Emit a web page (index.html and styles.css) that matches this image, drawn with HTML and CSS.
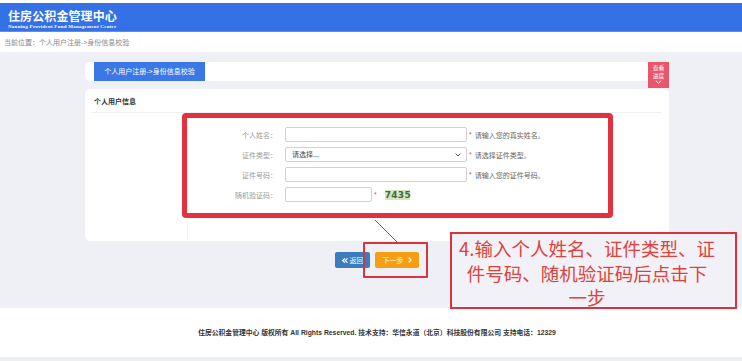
FILE: index.html
```html
<!DOCTYPE html>
<html lang="zh-CN">
<head>
<meta charset="utf-8">
<title>住房公积金管理中心</title>
<link rel="stylesheet" href="styles.css">
</head>
<body>
<header class="topbar">
  <div class="brand">
    <div class="brand-title">住房公积金管理中心</div>
    <div class="brand-sub">Nanning Provident Fund Management Center</div>
  </div>
</header>
<div class="crumb">当前位置：个人用户注册-&gt;身份信息校验</div>
<main class="main">
  <div class="wrap">
    <div class="tabrow">
      <div class="tabbar"><div class="tab">个人用户注册-&gt;身份信息校验</div></div>
      <div class="badge">
        <span class="bl">查看</span><span class="bl">进度</span>
        <svg width="7" height="4" viewBox="0 0 7 4"><path d="M0.8 0.6 L3.5 3.2 L6.2 0.6" fill="none" stroke="#fff" stroke-width="1"/></svg>
      </div>
    </div>
    <section class="card">
      <div class="card-title">个人用户信息</div>
      <div class="form">
        <div class="row">
          <label class="lbl">个人姓名：</label>
          <input class="inp" type="text">
          <span class="req">*</span><span class="hint">请输入您的真实姓名。</span>
        </div>
        <div class="row">
          <label class="lbl">证件类型：</label>
          <div class="sel">
            <span>请选择...</span>
            <svg class="chev" width="6" height="4" viewBox="0 0 6 4"><path d="M0.6 0.6 L3 3 L5.4 0.6" fill="none" stroke="#555" stroke-width="1"/></svg>
          </div>
          <span class="req">*</span><span class="hint">请选择证件类型。</span>
        </div>
        <div class="row">
          <label class="lbl">证件号码：</label>
          <input class="inp" type="text">
          <span class="req">*</span><span class="hint">请输入您的证件号码。</span>
        </div>
        <div class="row">
          <label class="lbl">随机验证码：</label>
          <input class="inp short" type="text">
          <span class="req">*</span><span class="captcha">7435</span>
        </div>
      </div>
    </section>
    <div class="actions">
      <button class="btn back"><svg width="6" height="5" viewBox="0 0 6 5"><path d="M3 0.3 L0.6 2.5 L3 4.7 M5.6 0.3 L3.2 2.5 L5.6 4.7" fill="none" stroke="#fff" stroke-width="1.1"/></svg>返回</button>
      <button class="btn next">下一步<svg width="4" height="6" viewBox="0 0 4 6"><path d="M0.8 0.6 L3 3 L0.8 5.4" fill="none" stroke="#fff" stroke-width="1.4"/></svg></button>
    </div>
  </div>

  <div class="mark mark-form"></div>
  <svg class="mark-line" width="30" height="30" viewBox="0 0 30 30"><line x1="3" y1="1" x2="25" y2="23" stroke="#c8404a" stroke-width="1"/></svg>
  <div class="mark mark-btn"></div>
  <div class="note">4.输入个人姓名、证件类型、证<br>件号码、随机验证码后点击下<br>一步</div>
</main>
<footer class="footer">住房公积金管理中心 版权所有 All Rights Reserved. 技术支持：华信永道（北京）科技股份有限公司 支持电话：12329</footer>
<div class="bottomline"></div>
</body>
</html>
```

FILE: styles.css
```css
* { box-sizing: border-box; }
html, body { margin: 0; padding: 0; }
body {
  width: 742px;
  height: 361px;
  overflow: hidden;
  background: #fff;
  font-family: "Liberation Sans", "Noto Sans CJK SC", sans-serif;
  color: #333;
}

.topbar {
  margin-top: 3px;
  height: 29px;
  background: #3471e6;
  border-bottom: 1px solid #5d8fe8;
}
.brand { padding: 6px 0 0 8px; color: #fff; }
.brand-title {
  font-family: "Noto Sans CJK SC", sans-serif;
  font-weight: 700;
  font-size: 12px;
  line-height: 14px;
  letter-spacing: 0.1px;
}
.brand-sub {
  font-family: "Liberation Serif", serif;
  font-weight: 700;
  font-size: 5px;
  line-height: 6px;
  margin-top: 1px;
  letter-spacing: 0.25px;
}

.crumb {
  height: 20px;
  line-height: 20px;
  padding-left: 4px;
  font-size: 7px;
  color: #8a8a8a;
  font-family: "Noto Sans CJK SC", sans-serif;
}

.main {
  position: relative;
  height: 256px;
  background: #eff0f5;
  padding-top: 10px;
}
.wrap { margin-left: 85px; width: 584px; }

.tabrow { display: flex; align-items: flex-start; height: 26px; }
.tabbar {
  width: 563px;
  height: 19px;
  background: #fff;
  border-radius: 5px 0 0 5px;
  padding-left: 9px;
}
.tab {
  width: 111px;
  height: 19px;
  line-height: 19px;
  background: #3a78e6;
  color: #fff;
  font-size: 7px;
  text-align: center;
  font-family: "Noto Sans CJK SC", sans-serif;
}
.badge {
  width: 21px;
  height: 26px;
  background: #e8566c;
  color: #fff;
  display: flex;
  flex-direction: column;
  align-items: center;
  padding-top: 2px;
  font-family: "Noto Sans CJK SC", sans-serif;
}
.bl { display: block; font-size: 5.8px; line-height: 7.5px; height: 7.5px; }
.badge svg { margin-top: 1px; }

.card {
  margin-top: 1px;
  height: 152px;
  background: #fff;
  border-radius: 5px;
  padding: 0 7px;
}
.card-title {
  height: 24px;
  line-height: 24px;
  padding-left: 2px;
  font-size: 7px;
  font-weight: 700;
  color: #333;
  border-bottom: 1px solid #eeeff2;
  font-family: "Noto Sans CJK SC", sans-serif;
}
.form {
  margin-left: 95px;
  height: 127px;
  border-left: 1px solid #f3f4f6;
  padding-top: 14px;
  display: flex;
  flex-direction: column;
  gap: 5px;
}
.row { display: flex; align-items: center; height: 15px; }
.lbl {
  width: 89px;
  text-align: right;
  font-size: 7px;
  color: #9a9a9a;
  margin-right: 8px;
  font-family: "Noto Sans CJK SC", sans-serif;
}
.inp, .sel {
  width: 182px;
  height: 15px;
  border: 1px solid #d2d2d2;
  border-radius: 2px;
  background: #fff;
  padding: 0;
  margin: 0;
}
.inp.short { width: 87px; }
.sel {
  position: relative;
  font-size: 7px;
  color: #444;
  line-height: 13px;
  padding-left: 6px;
  font-family: "Noto Sans CJK SC", sans-serif;
}
.chev { position: absolute; right: 5px; top: 5px; }
.req { color: #d9534f; font-size: 7px; margin: 0 3px 0 2px; }
.hint { font-size: 7px; color: #666; font-family: "Noto Sans CJK SC", sans-serif; }
.captcha {
  margin-left: 5px;
  width: 25px;
  height: 10px;
  line-height: 10px;
  background: #d6e6bd;
  color: #3d6b45;
  font-size: 9px;
  font-weight: 700;
  text-align: center;
  letter-spacing: 0.3px;
  font-family: "DejaVu Sans", sans-serif;
}

.actions {
  margin-top: 11px;
  display: flex;
  justify-content: center;
  gap: 5px;
}
.btn {
  height: 16px;
  border: 0;
  border-radius: 2px;
  color: #fff;
  font-size: 7px;
  padding: 0;
  display: flex;
  align-items: center;
  justify-content: center;
  gap: 2px;
  font-family: "Noto Sans CJK SC", sans-serif;
}
.back { width: 35px; background: #3b7cc0; }
.next { width: 44px; background: #f59e12; gap: 4px; }

.mark {
  position: absolute;
  border: 5px solid #e0323f;
  border-radius: 4px;
}
.mark-form { left: 182px; top: 61px; width: 431px; height: 105px; }
.mark-btn {
  left: 363px; top: 190px; width: 65px; height: 36px;
  border-width: 2px; border-radius: 1px; border-color: #d8343f;
}
.mark-line { position: absolute; left: 372px; top: 167px; }
.note {
  position: absolute;
  left: 450px;
  top: 180px;
  width: 287px;
  height: 77px;
  border: 2px solid #d8343f;
  background: #f2f1f7;
  color: #e0413b;
  font-size: 18.5px;
  line-height: 24.5px;
  text-align: center;
  padding: 2px 13px 0 0;
  white-space: nowrap;
  font-family: "Noto Sans CJK SC", sans-serif;
  z-index: 2;
}

.footer {
  height: 49px;
  line-height: 49px;
  text-align: center;
  padding-left: 12px;
  font-size: 6.8px;
  font-weight: 700;
  color: #333;
  font-family: "Liberation Sans", "Noto Sans CJK SC", sans-serif;
}
.bottomline { height: 4px; background: #eeeff2; }
```
